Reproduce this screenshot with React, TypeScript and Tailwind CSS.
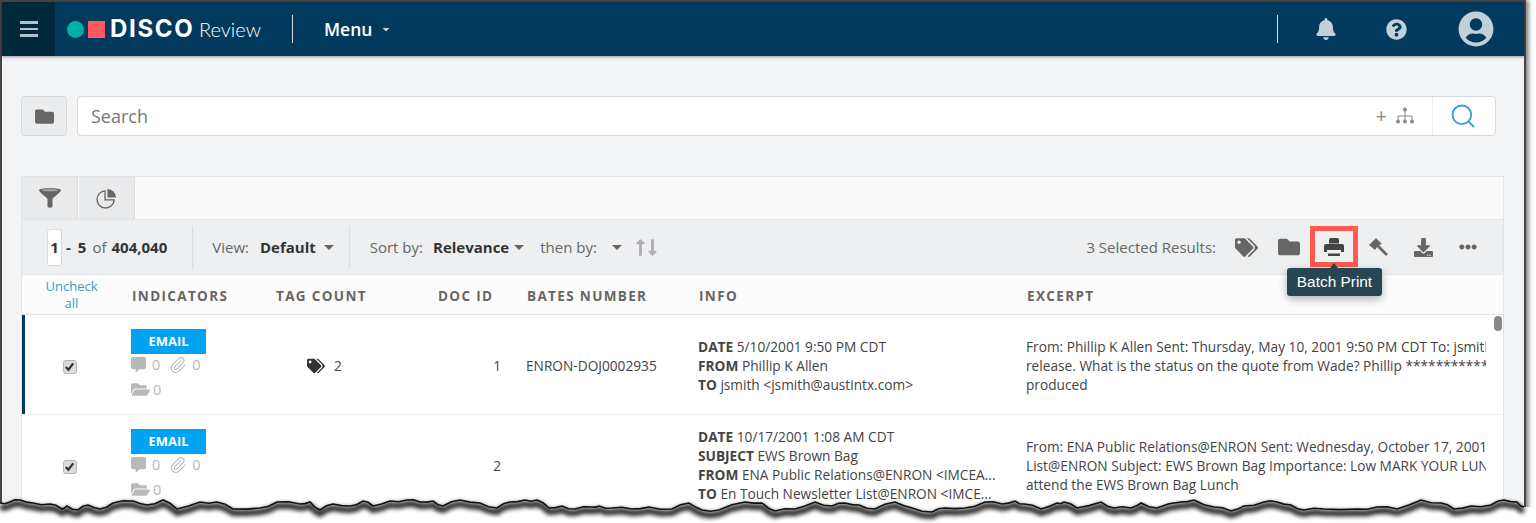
import type { ReactNode } from 'react';
import {
  FaBell,
  FaCommentAlt,
  FaDownload,
  FaEllipsisH,
  FaFolder,
  FaFolderOpen,
  FaLongArrowAltDown,
  FaLongArrowAltUp,
  FaQuestionCircle,
  FaTags,
  FaUserCircle,
} from 'react-icons/fa';
import { Paperclip, Search } from 'lucide-react';

// torn paper edge, traced from the picture: [x, y]
const trace = [
  [0, 503], [10, 502], [20, 500], [33, 503], [50, 504], [62, 509], [67, 506], [78, 510], [88, 505], [100, 509],
  [113, 503], [133, 501], [147, 505], [163, 500], [177, 509], [200, 502], [217, 502], [233, 509], [260, 508],
  [277, 502], [300, 504], [310, 502], [320, 510], [333, 504], [350, 506], [363, 501], [373, 506], [390, 501],
  [407, 500], [420, 502], [433, 501], [443, 506], [460, 500], [480, 503], [497, 508], [510, 502], [525, 500],
  [537, 500], [549, 508], [562, 506], [575, 509], [592, 507], [599, 506], [612, 508], [632, 509], [649, 507],
  [672, 509], [689, 503], [702, 510], [719, 510], [745, 502], [762, 503], [775, 511], [795, 509], [815, 502],
  [832, 506], [845, 503], [859, 505], [875, 509], [895, 502], [912, 508], [932, 512], [945, 508], [965, 508],
  [985, 502], [1002, 504], [1015, 501], [1024, 504], [1041, 509], [1057, 503], [1064, 502], [1077, 508],
  [1101, 502], [1114, 508], [1131, 508], [1141, 503], [1157, 508], [1181, 502], [1194, 500], [1214, 507],
  [1231, 511], [1244, 506], [1264, 502], [1277, 502], [1291, 505], [1304, 510], [1324, 509], [1357, 509],
  [1377, 507], [1397, 509], [1421, 500], [1441, 503], [1454, 509], [1471, 506], [1491, 505], [1504, 500],
  [1517, 502], [1524, 507],
];

// adds the small jaggies between the traced points
const edge = trace
  .flatMap(([x, y], i) => {
    const next = trace[i + 1];
    if (!next) return [`${x},${y}`];
    const mx = (x + next[0]) / 2;
    const my = (y + next[1]) / 2 + (i % 3 === 0 ? 1.2 : i % 3 === 1 ? -1.2 : 0.6);
    return [`${x},${y}`, `${mx},${my}`];
  })
  .join(' ');

const columns = 'grid grid-cols-[109px_144px_162px_89px_172px_328px_460px]';
const heads = ['INDICATORS', 'TAG COUNT', 'DOC ID', 'BATES NUMBER', 'INFO', 'EXCERPT'];

const Caret = ({ className = '' }: { className?: string }) => (
  <svg viewBox="0 0 10 5" className={`h-[5px] w-[10px] text-[#666] ${className}`}>
    <path d="M0 0 H10 L5 5 Z" fill="currentColor" />
  </svg>
);

const Divider = ({ className = '' }: { className?: string }) => <div className={`w-px bg-[#dcdde0] ${className}`} />;

const Check = () => (
  <span className="flex h-[14px] w-[14px] items-center justify-center rounded-[3px] border border-[#b5b5b5] bg-[#dcdcdc]">
    <svg viewBox="0 0 12 12" className="h-[11px] w-[11px]">
      <path d="M2 6.5 L4.8 9.5 L10 2.5" fill="none" stroke="#333" strokeWidth="2.4" />
    </svg>
  </span>
);

const Indicators = () => (
  <div className="flex flex-col items-start pt-[14px] text-[14.5px] leading-[19px] text-[#b9b9b9]">
    <div className="flex h-[25px] w-[75px] items-center justify-center bg-[#00a2f2] text-[13px] font-bold text-white">EMAIL</div>
    <div className="mt-[1px] flex h-[19px] items-center">
      <FaCommentAlt className="w-[15px] text-[15px]" />
      <span className="ml-[6px]">0</span>
      <Paperclip className="ml-[9px] h-[18px] w-[18px]" strokeWidth={1.4} />
      <span className="ml-[5px]">0</span>
    </div>
    <div className="mt-[6px] flex h-[19px] items-center">
      <FaFolderOpen className="text-[19px]" />
      <span className="ml-[3px]">0</span>
    </div>
  </div>
);

const Line = ({ label, children }: { label: string; children: ReactNode }) => (
  <div className="whitespace-nowrap">
    <b className="font-bold">{label}</b> {children}
  </div>
);

const Row = ({
  active,
  tags,
  id,
  bates,
  info,
  excerpt,
}: {
  active?: boolean;
  tags?: number;
  id: number;
  bates?: string;
  info: [string, string][];
  excerpt: string[];
}) => (
  <div className={`${columns} h-[100px] border-b border-[#eeeeee] text-[13.7px] leading-[19px] text-[#444] ${active ? 'relative' : ''}`}>
    {active && <div className="absolute bottom-0 left-0 top-0 w-[3px] bg-[#023a5e]" />}
    <div className="flex items-center justify-center pr-[14px] pt-[4px]">
      <Check />
    </div>
    <Indicators />
    <div className="flex items-center pl-[32px] pt-[2px]">
      {tags && (
        <>
          <FaTags className="text-[18px] text-[#333]" />
          <span className="ml-[9px]">{tags}</span>
        </>
      )}
    </div>
    <div className="flex items-center justify-end pr-[25px] pt-[2px]">{id}</div>
    <div className="flex items-center pt-[2px]">{bates}</div>
    <div className={`flex flex-col justify-center ${info.length < 4 ? 'pt-[2px]' : ''}`}>
      {info.map(([label, text]) => (
        <Line key={label} label={label}>
          {text}
        </Line>
      ))}
    </div>
    <div className="flex flex-col justify-center overflow-hidden whitespace-nowrap pt-[2px]">
      {excerpt.map((text) => (
        <div key={text}>{text}</div>
      ))}
    </div>
  </div>
);

export default function App() {
  return (
    <div className="relative h-[523px] w-[1536px] overflow-hidden bg-white font-['Open_Sans',sans-serif]">
      {/* Window */}
      <div className="h-[512px] w-[1526px] border-x-2 border-t-2 border-x-[#454545] border-t-[#454545] bg-[#f3f4f6] shadow-[3px_0_4px_rgba(0,0,0,0.45)]">
        {/* Top bar */}
        <header className="flex h-[54px] items-center bg-[#023a5e] shadow-[0_1px_3px_rgba(0,0,0,0.4)]">
          <div className="flex h-full w-[53px] flex-col items-center justify-center gap-[4px] bg-[#02283c]">
            <span className="h-[2.5px] w-[18px] bg-[#b4c2cc]" />
            <span className="h-[2.5px] w-[18px] bg-[#b4c2cc]" />
            <span className="h-[2.5px] w-[18px] bg-[#b4c2cc]" />
          </div>
          <span className="ml-[12px] h-[17px] w-[17px] rounded-full bg-[#00b1a7]" />
          <span className="ml-[4px] h-[17px] w-[17px] bg-[#ff5a5f]" />
          <span className="ml-[5px] w-[84px] font-['Inter',sans-serif] text-[24px] font-bold tracking-[0.07em] text-white">DISCO</span>
          <span className="ml-[5px] w-[62px] font-['Lato',sans-serif] text-[20px] font-light text-white">Review</span>
          <Divider className="ml-[31px] h-[28px] bg-[#7f9bae]" />
          <span className="ml-[31px] w-[49px] text-[17.5px] font-semibold text-white">Menu</span>
          <Caret className="ml-[8px] scale-75 text-[#c5d0d8]" />
          <Divider className="ml-auto h-[28px] bg-[#7f9bae]" />
          <FaBell className="ml-[37px] text-[22px] text-[#c2d0da]" />
          <FaQuestionCircle className="ml-[49px] text-[21px] text-[#c2d0da]" />
          <FaUserCircle className="ml-[51px] mr-[30px] text-[36px] text-[#c2d0da]" />
        </header>

        {/* Search */}
        <div className="ml-[19px] mt-[40px] flex h-[40px] w-[1475px] gap-[10px]">
          <div className="flex w-[46px] items-center justify-center rounded-[3px] border border-[#d7d8da] bg-[#ebecee]">
            <FaFolder className="text-[19px] text-[#666]" />
          </div>
          <div className="flex flex-1 items-center rounded-[4px] border border-[#d7d8da] bg-white">
            <span className="ml-[13px] text-[18px] text-[#777]">Search</span>
            <span className="ml-auto text-[20px] leading-none text-[#888]">+</span>
            <svg viewBox="0 0 20 18" className="ml-[8px] h-[18px] w-[20px] text-[#888]">
              <path d="M10 3 V9 M3 13 V9 H17 V13 M10 9 V13" fill="none" stroke="currentColor" strokeWidth="1" />
              <circle cx="10" cy="2.5" r="2" fill="currentColor" />
              <circle cx="3" cy="14.5" r="2" fill="currentColor" />
              <circle cx="10" cy="14.5" r="2" fill="currentColor" />
              <circle cx="17" cy="14.5" r="2" fill="currentColor" />
            </svg>
            <div className="ml-[17px] flex h-full w-[63px] items-center justify-center border-l border-[#eeeeee] pr-[3px]">
              <Search className="h-[28px] w-[28px] text-[#3a9fc6]" strokeWidth={1.6} />
            </div>
          </div>
        </div>

        {/* Results panel */}
        <div className="ml-[19px] mt-[40px] w-[1483px] border border-[#e3e4e6] bg-white">
          <div className="flex h-[42px] gap-[1px] bg-[#fafafa]">
            <div className="flex w-[56px] items-center justify-center border-r border-[#dcdde0] bg-[#e9eaec]">
              <svg viewBox="0 0 22 20" className="h-[20px] w-[22px] text-[#666]">
                <path d="M0 2 C0 -0.5 22 -0.5 22 2 C22 4 15 9 13.5 11 V19 Q11 20.5 8.5 19 V11 C7 9 0 4 0 2 Z" fill="currentColor" />
                <ellipse cx="11" cy="2.2" rx="8" ry="1" fill="#a8a9ab" />
              </svg>
            </div>
            <div className="flex w-[56px] items-center justify-center border-r border-[#dcdde0] bg-[#e9eaec]">
              <svg viewBox="0 0 22 22" className="h-[21px] w-[21px] text-[#666]">
                <path d="M9.5 3 A9 9 0 1 0 19 12.5 H9.5 Z" fill="none" stroke="currentColor" strokeWidth="1.4" />
                <path d="M12 1 A9 9 0 0 1 21 10 H12 Z" fill="currentColor" />
              </svg>
            </div>
          </div>

          {/* Toolbar */}
          <div className="flex h-[56px] items-center border-y border-[#e3e4e6] bg-[#eeeff1] text-[15px] text-[#666]">
            <span className="ml-[25px] flex h-[37px] w-[15px] items-center justify-center rounded-[3px] border border-[#d7d8da] bg-white font-bold text-[#333]">1</span>
            <b className="ml-[4px] text-[#333]">-</b>
            <b className="ml-[7px] text-[#333]">5</b>
            <span className="ml-[6px]">of</span>
            <b className="ml-[5px] text-[#333]">404,040</b>
            <Divider className="ml-[25px] h-[43px]" />
            <span className="ml-[19px]">View:</span>
            <b className="ml-[11px] text-[#333]">Default</b>
            <Caret className="ml-[8px]" />
            <Divider className="ml-[15px] h-[43px]" />
            <span className="ml-[20px]">Sort by:</span>
            <b className="ml-[10px] text-[#333]">Relevance</b>
            <Caret className="ml-[5px]" />
            <span className="ml-[16px]">then by:</span>
            <Caret className="ml-[15px]" />
            <span className="ml-[9px] flex text-[#b0b1b3]">
              <FaLongArrowAltUp className="text-[19px]" />
              <FaLongArrowAltDown className="-ml-[7px] text-[19px]" />
            </span>
            <div className="ml-auto flex items-center">
              <span>3 Selected Results:</span>
              <FaTags className="ml-[19px] text-[23px] text-[#666]" />
              <FaFolder className="ml-[20px] text-[22px] text-[#666]" />
              <span className="relative ml-[24px] flex">
                <svg viewBox="0 0 20 18" className="h-[18px] w-[20px] text-[#444]">
                  <path d="M5 5.5 V2 Q5 0 7 0 H13 Q15 0 15 2 V5.5 Z" fill="currentColor" />
                  <path d="M2 6 H18 Q20 6 20 8 V14 H17 V12 H3 V14 H0 V8 Q0 6 2 6 Z" fill="currentColor" />
                  <rect x="4" y="15.5" width="12" height="2.5" rx="0.5" fill="currentColor" />
                </svg>
                <span className="absolute -left-[14px] -top-[12px] h-[41px] w-[48px] border-[5px] border-[#ff5a50]" />
                <span className="absolute left-[6px] top-[25px] h-0 w-0 border-x-[4px] border-b-[5px] border-x-transparent border-b-[#264653]" />
                <span className="absolute -left-[37px] top-[30px] flex h-[28px] w-[95px] items-center justify-center rounded-[3px] bg-[#264653] font-['Liberation_Sans',sans-serif] text-[15.4px] text-white shadow-[0_3px_8px_rgba(0,0,0,0.3)]">
                  Batch Print
                </span>
              </span>
              <svg viewBox="0 0 22 22" className="ml-[24px] h-[22px] w-[22px] text-[#666]">
                <path d="M1 9 L8 2 L14 8 L11 9 L20 18 L18 20 L9 11 L7 14 Z" fill="currentColor" />
              </svg>
              <FaDownload className="ml-[24px] text-[19px] text-[#666]" />
              <FaEllipsisH className="ml-[26px] mr-[26px] text-[18px] text-[#666]" />
            </div>
          </div>

          {/* Table head */}
          <div className={`${columns} h-[40px] items-center border-b border-[#e3e4e6] bg-[#fcfcfc] text-[13.5px] font-bold tracking-[0.1em] text-[#666]`}>
            <div className="pr-[10px] text-center text-[13px] font-normal leading-[17px] tracking-normal text-[#3a9fc6]">
              Uncheck
              <br />
              all
            </div>
            {heads.map((head) => (
              <div key={head} className="pl-[1px] pt-[3px]">
                {head}
              </div>
            ))}
          </div>

          {/* Rows */}
          <div className="relative">
            <Row
              active
              tags={2}
              id={1}
              bates="ENRON-DOJ0002935"
              info={[
                ['DATE', '5/10/2001 9:50 PM CDT'],
                ['FROM', 'Phillip K Allen'],
                ['TO', 'jsmith <jsmith@austintx.com>'],
              ]}
              excerpt={[
                'From: Phillip K Allen Sent: Thursday, May 10, 2001 9:50 PM CDT To: jsmith',
                'release. What is the status on the quote from Wade? Phillip ***************',
                'produced',
              ]}
            />
            <Row
              id={2}
              info={[
                ['DATE', '10/17/2001 1:08 AM CDT'],
                ['SUBJECT', 'EWS Brown Bag'],
                ['FROM', 'ENA Public Relations@ENRON <IMCEA...'],
                ['TO', 'En Touch Newsletter List@ENRON <IMCE...'],
              ]}
              excerpt={[
                'From: ENA Public Relations@ENRON Sent: Wednesday, October 17, 2001',
                'List@ENRON Subject: EWS Brown Bag Importance: Low MARK YOUR LUNCH',
                'attend the EWS Brown Bag Lunch',
              ]}
            />
            <span className="absolute right-[1px] top-[1px] h-[15px] w-[8px] rounded-full bg-[#888]" />
          </div>
        </div>
      </div>

      {/* Torn bottom edge */}
      <svg viewBox="0 0 1536 523" className="absolute inset-0 h-[523px] w-[1536px]">
        <defs>
          <filter id="tear" x="-5%" y="-200%" width="110%" height="500%">
            <feGaussianBlur stdDeviation="2" />
          </filter>
        </defs>
        <polygon points={`${edge} 1536,507 1536,523 0,523`} fill="white" />
        <polyline points={edge} fill="none" stroke="#000" strokeWidth="6" opacity="0.85" filter="url(#tear)" transform="translate(0 4)" />
        <polyline points={edge} fill="none" stroke="#111" strokeWidth="1.6" />
      </svg>
    </div>
  );
}
